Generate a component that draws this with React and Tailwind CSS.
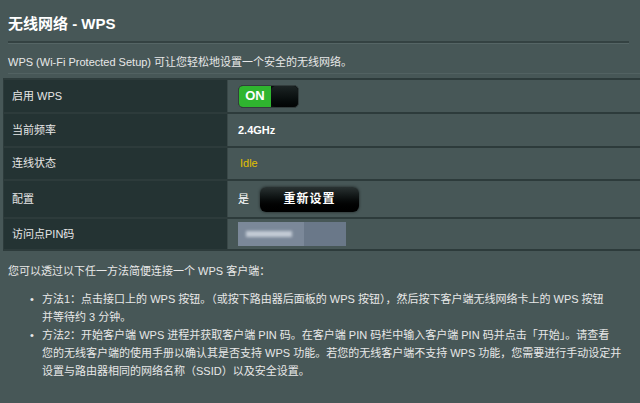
const FONT = { fontFamily: '"Liberation Sans", "Noto Sans CJK SC", sans-serif' };

function Row({ label, h, children, last }) {
  return (
    <div className={`flex ${h} border-b-2 border-[#2d3b3b]`}>
      <div className="w-[224px] shrink-0 bg-[#243333] flex items-center pl-2 text-[11px] text-[#e6e6e6] border-r border-[#3a4848]">
        {label}
      </div>
      <div className="flex-1 flex items-center pl-[10px]">{children}</div>
    </div>
  );
}

export default function App() {
  return (
    <div className="w-[640px] h-[403px] overflow-hidden bg-[#475757] text-[#e8e8e8]" style={FONT}>
      {/* 标题 */}
      <div className="pt-[15px] px-2">
        <h1 className="text-[15px] leading-[18px] font-bold text-white">无线网络 - WPS</h1>
        <div className="mt-[8px] mr-[3px] border-t-2 border-[#344242]" />
        <div className="mr-[3px] border-t border-[#556565]" />
      </div>

      <p className="pl-2 mt-[10px] text-[11px] leading-[16px]">
        WPS (Wi-Fi Protected Setup) 可让您轻松地设置一个安全的无线网络。
      </p>
      <div className="mt-[3px] ml-2 border-t border-[#526262]" />

      {/* 设置表格 */}
      <div className="mt-[4px] ml-[3px] border-t-2 border-l border-[#2d3b3b]">
        <Row label="启用 WPS" h="h-[34px]">
          <div className="flex h-[23px] w-[61px] rounded-[5px] overflow-hidden bg-[#0a0d0d] border border-[#333d3d]">
            <div className="w-[32px] bg-[#2fb52f] flex items-center justify-center text-[13px] font-bold text-white">
              ON
            </div>
            <div className="flex-1 rounded-[5px] bg-gradient-to-b from-[#1c2424] to-[#020404]" />
          </div>
        </Row>
        <Row label="当前频率" h="h-[34px]">
          <span className="text-[11px] font-bold text-white">2.4GHz</span>
        </Row>
        <Row label="连线状态" h="h-[33px]">
          <span className="pl-[2px] text-[11px] text-[#e2c000]">Idle</span>
        </Row>
        <Row label="配置" h="h-[38px]">
          <span className="text-[11px] text-white">是</span>
          <button className="ml-[11px] h-[25px] w-[99px] rounded-[6px] bg-gradient-to-b from-[#2a3333] to-[#000000] shadow-[0_0_3px_rgba(0,0,0,0.6)] text-[12px] font-bold text-white tracking-[1px]">
            重新设置
          </button>
        </Row>
        <Row label="访问点PIN码" h="h-[32px]">
          <div className="flex h-[24px] w-[108px] bg-[#6a7889] overflow-hidden">
            <div className="w-[66px] bg-[#7b8899] flex items-center pl-[8px]">
              <div className="h-[6px] w-[46px] bg-[#c4ccd6] blur-[1.5px]" />
            </div>
          </div>
        </Row>
      </div>

      {/* 说明 */}
      <div className="pl-2 mt-[11px] text-[11px] leading-[18px]">
        <p>您可以透过以下任一方法简便连接一个 WPS 客户端：</p>
        <ul className="mt-[10px] pl-[22px]">
          <li className="flex">
            <span className="w-[12px] shrink-0">•</span>
            <span>
              <span className="block whitespace-nowrap">
                方法1：点击接口上的 WPS 按钮。（或按下路由器后面板的 WPS 按钮），然后按下客户端无线网络卡上的 WPS 按钮
              </span>
              <span className="block">并等待约 3 分钟。</span>
            </span>
          </li>
          <li className="flex">
            <span className="w-[12px] shrink-0">•</span>
            <span>
              <span className="block whitespace-nowrap">
                方法2：开始客户端 WPS 进程并获取客户端 PIN 码。在客户端 PIN 码栏中输入客户端 PIN 码并点击「开始」。请查看
              </span>
              <span className="block whitespace-nowrap">
                您的无线客户端的使用手册以确认其是否支持 WPS 功能。若您的无线客户端不支持 WPS 功能，您需要进行手动设定并
              </span>
              <span className="block">设置与路由器相同的网络名称（SSID）以及安全设置。</span>
            </span>
          </li>
        </ul>
      </div>
    </div>
  );
}
